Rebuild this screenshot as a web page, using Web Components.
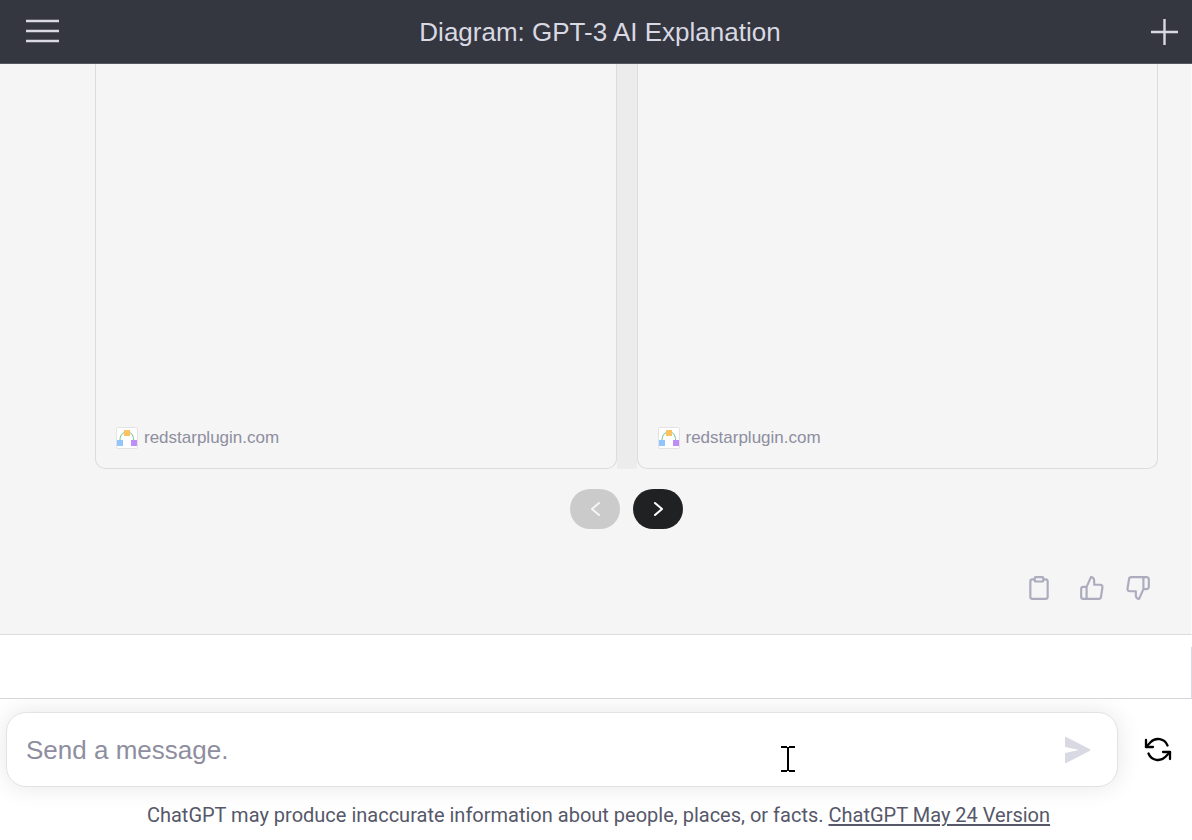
<!DOCTYPE html>
<html lang="en">
<head>
<meta charset="utf-8">
<meta name="viewport" content="width=device-width, initial-scale=1">
<title>Diagram: GPT-3 AI Explanation</title>
<style>
  body {
    margin: 0;
    font-family: "Liberation Sans", Arial, sans-serif;
    background: #fff;
  }
</style>
</head>
<body>
<chat-app>
  <top-bar slot="header">Diagram: GPT-3 AI Explanation</top-bar>
  <chat-turn>
    <card-carousel>
      <link-card href="https://redstarplugin.com">redstarplugin.com</link-card>
      <link-card href="https://redstarplugin.com">redstarplugin.com</link-card>
    </card-carousel>
    <turn-actions slot="actions"></turn-actions>
  </chat-turn>
  <message-composer slot="footer" placeholder="Send a message.">
    ChatGPT may produce inaccurate information about people, places, or facts.
    <a slot="version" href="#release-notes">ChatGPT May 24 Version</a>
  </message-composer>
</chat-app>

<script>
// small helper: every element clones its template into an open root
function define(name, markup, setup) {
  const template = document.createElement('template');
  template.innerHTML = markup;
  customElements.define(name, class extends HTMLElement {
    constructor() {
      super();
      this.attachShadow({ mode: 'open' }).appendChild(template.content.cloneNode(true));
    }
    connectedCallback() {
      if (setup) setup(this, this.shadowRoot);
    }
  });
}

const buttonReset = `
  button {
    display: flex;
    align-items: center;
    justify-content: center;
    margin: 0;
    padding: 0;
    border: 0;
    background: none;
    color: inherit;
    cursor: pointer;
  }
  svg { display: block; fill: none; stroke: currentColor; stroke-linecap: round; stroke-linejoin: round; }
`;

define('chat-app', `
  <style>
    :host { display: flex; flex-direction: column; min-height: 100vh; }
    main { flex: 1; display: flex; flex-direction: column; }
    .spacer { display: flex; justify-content: flex-end; height: 63px; }
    .track { width: 1px; margin-top: 12px; background: #d9d9e3; }
  </style>
  <slot name="header"></slot>
  <main>
    <slot></slot>
    <div class="spacer"><div class="track"></div></div>
  </main>
  <slot name="footer"></slot>
`);

define('top-bar', `
  <style>
    ${buttonReset}
    :host {
      display: grid;
      grid-template-columns: 1fr auto 1fr;
      align-items: center;
      height: 63px;
      padding: 0 14px 0 22px;
      border-bottom: 1px solid #565761;
      background: #343640;
      color: #d9d9e3;
    }
    h1 { margin: 0; font-size: 26px; line-height: 32px; font-weight: 400; }
    button { justify-self: start; padding: 0 4px 2px; }
    .new { justify-self: end; padding: 0; }
    svg { stroke-linecap: butt; }
  </style>
  <button type="button" aria-label="Open sidebar">
    <svg width="33" height="26" viewBox="0 0 33 26" stroke-width="2.4"><path d="M0 3h33M0 13h33M0 23h33"/></svg>
  </button>
  <h1><slot></slot></h1>
  <button type="button" class="new" aria-label="New chat">
    <svg width="27" height="27" viewBox="0 0 27 27" stroke-width="2.4"><path d="M13.500 1v26M0 14h27"/></svg>
  </button>
`);

define('chat-turn', `
  <style>
    :host {
      flex: 1;
      display: flex;
      flex-direction: column;
      padding: 0 33px 33px 95px;
      border-right: 1px solid #fafafa;
      border-bottom: 1px solid #dcdcde;
      background: #f5f5f5;
    }
    .content { flex: 1; display: flex; flex-direction: column; }
  </style>
  <div class="content"><slot></slot></div>
  <slot name="actions"></slot>
`);

define('card-carousel', `
  <style>
    ${buttonReset}
    :host { flex: 1; display: flex; flex-direction: column; }
    .cards {
      flex: 1;
      display: grid;
      grid-template-columns: 1fr 1fr;
      gap: 20px;
      background: linear-gradient(#ececec, #ececec) center / 20px 100% no-repeat;
    }
    nav { display: flex; justify-content: center; gap: 13px; padding: 20px 0 46px; }
    nav button { width: 50px; height: 40px; border-radius: 20px; background: #202123; color: #fff; }
    nav button:disabled { background: #cbcbcb; color: #f5f5f5; cursor: default; }
  </style>
  <div class="cards"><slot></slot></div>
  <nav aria-label="Cards">
    <button type="button" aria-label="Previous" disabled>
      <svg width="24" height="24" viewBox="0 0 24 24" stroke-width="2"><path d="M16 6l-7 6 7 6"/></svg>
    </button>
    <button type="button" aria-label="Next">
      <svg width="24" height="24" viewBox="0 0 24 24" stroke-width="2"><path d="M9 6l7 6-7 6"/></svg>
    </button>
  </nav>
`);

define('link-card', `
  <style>
    :host {
      display: flex;
      align-items: flex-end;
      padding: 0 20px 19px;
      border: 1px solid #dcdcde;
      border-top: 0;
      border-radius: 0 0 10px 10px;
      background: #f5f5f5;
    }
    a {
      display: flex;
      align-items: center;
      gap: 6px;
      color: #8e8ea0;
      font-size: 17px;
      line-height: 22px;
      text-decoration: none;
    }
    svg { display: block; }
  </style>
  <a>
    <svg width="22" height="22" viewBox="0 0 22 22">
      <rect x="0.5" y="0.5" width="21" height="21" rx="1.5" fill="#fff" stroke="#e3e3e6"/>
      <path d="M4 13C4 9 6 6 9 5.500M13 5.500C16 6 17.500 9 17.500 13" fill="none" stroke="#6cc58b"/>
      <rect x="8" y="3" width="6" height="6" fill="#fbc35f"/>
      <rect x="1" y="13" width="6" height="6" fill="#93c5fd"/>
      <rect x="15" y="13" width="6" height="6" fill="#c08cf8"/>
    </svg>
    <slot></slot>
  </a>
`, (host, root) => {
  root.querySelector('a').href = host.getAttribute('href');
});

define('turn-actions', `
  <style>
    ${buttonReset}
    :host {
      display: flex;
      justify-content: flex-end;
      gap: 20px;
      padding-right: 7px;
      color: #acacbe;
    }
    .copy { margin-right: 7px; }
  </style>
  <button type="button" class="copy" aria-label="Copy">
    <svg width="26" height="26" viewBox="0 0 24 24" stroke-width="2">
      <path d="M16 4h2a2 2 0 0 1 2 2v14a2 2 0 0 1-2 2H6a2 2 0 0 1-2-2V6a2 2 0 0 1 2-2h2"/>
      <rect x="8" y="2" width="8" height="4" rx="1"/>
    </svg>
  </button>
  <button type="button" aria-label="Good response">
    <svg width="26" height="26" viewBox="0 0 24 24" stroke-width="2">
      <path d="M14 9V5a3 3 0 0 0-3-3l-4 9v11h11.280a2 2 0 0 0 2-1.700l1.380-9a2 2 0 0 0-2-2.300zM7 22H4a2 2 0 0 1-2-2v-7a2 2 0 0 1 2-2h3"/>
    </svg>
  </button>
  <button type="button" aria-label="Bad response">
    <svg width="26" height="26" viewBox="0 0 24 24" stroke-width="2">
      <path d="M10 15v4a3 3 0 0 0 3 3l4-9V2H5.720a2 2 0 0 0-2 1.700l-1.380 9a2 2 0 0 0 2 2.300zm7-13h2.670A2.310 2.310 0 0 1 22 4v7a2.310 2.310 0 0 1-2.330 2H17"/>
    </svg>
  </button>
`);

define('message-composer', `
  <style>
    ${buttonReset}
    :host {
      display: block;
      padding: 13px 20px 13px 6px;
      border-top: 1px solid #d5d5da;
      overflow: hidden;
      color: #565869;
    }
    form { display: flex; align-items: center; gap: 26px; }
    .box {
      position: relative;
      flex: 1;
      display: flex;
      align-items: center;
      height: 73px;
      padding: 0 26px 0 19px;
      border: 1px solid #e3e3e5;
      border-radius: 20px;
      background: #fff;
      box-shadow: 0 0 24px rgba(0, 0, 0, .1);
    }
    input {
      flex: 1;
      min-width: 0;
      padding: 0;
      border: 0;
      outline: 0;
      background: none;
      color: #343541;
      font: 26px/32px "Liberation Sans", Arial, sans-serif;
    }
    input::placeholder { color: #8e8ea0; opacity: 1; }
    .send { color: #d9d9e3; }
    .send svg { fill: currentColor; stroke: none; }
    .retry { color: #000; }
    /* text pointer floating over the field */
    .pointer { position: absolute; left: 774px; top: 33px; stroke-linecap: butt; color: #000; }
    p {
      margin: 16px 0 0;
      padding-left: 19px;
      text-align: center;
      font-family: Roboto, "Liberation Sans", sans-serif;
      font-size: 20px;
      line-height: 24px;
    }
    ::slotted(a) { color: inherit; text-decoration: underline; text-underline-offset: 2px; }
  </style>
  <form>
    <div class="box">
      <input type="text" aria-label="Message">
      <button type="submit" class="send" aria-label="Send message" disabled>
        <svg width="27" height="28" viewBox="0 0 27 28">
          <path d="M1 1.800Q1 .5 2.200 1L26 13.200Q27 14 26 14.800L2.200 27Q1 27.500 1 26.200V17L15 14 1 11z"/>
        </svg>
      </button>
      <svg class="pointer" width="14" height="26" viewBox="0 0 14 26" stroke-width="2" aria-hidden="true">
        <path d="M0 1h6M8 1h6M7 1v24M0 25h6M8 25h6"/>
      </svg>
    </div>
    <button type="button" class="retry" aria-label="Regenerate response">
      <svg width="28" height="25" viewBox="0 0 28 25" stroke-width="2.3">
        <path d="M2 3v7h7M26 22v-7h-7"/>
        <path d="M23.500 8.500A10.300 10.300 0 0 0 6.500 5.200L2 10M26 15l-4.500 4.800A10.300 10.300 0 0 1 4.500 16.500"/>
      </svg>
    </button>
  </form>
  <p><slot></slot><slot name="version"></slot></p>
`, (host, root) => {
  root.querySelector('input').placeholder = host.getAttribute('placeholder');
  root.querySelector('form').addEventListener('submit', (event) => event.preventDefault());
});
</script>
</body>
</html>
